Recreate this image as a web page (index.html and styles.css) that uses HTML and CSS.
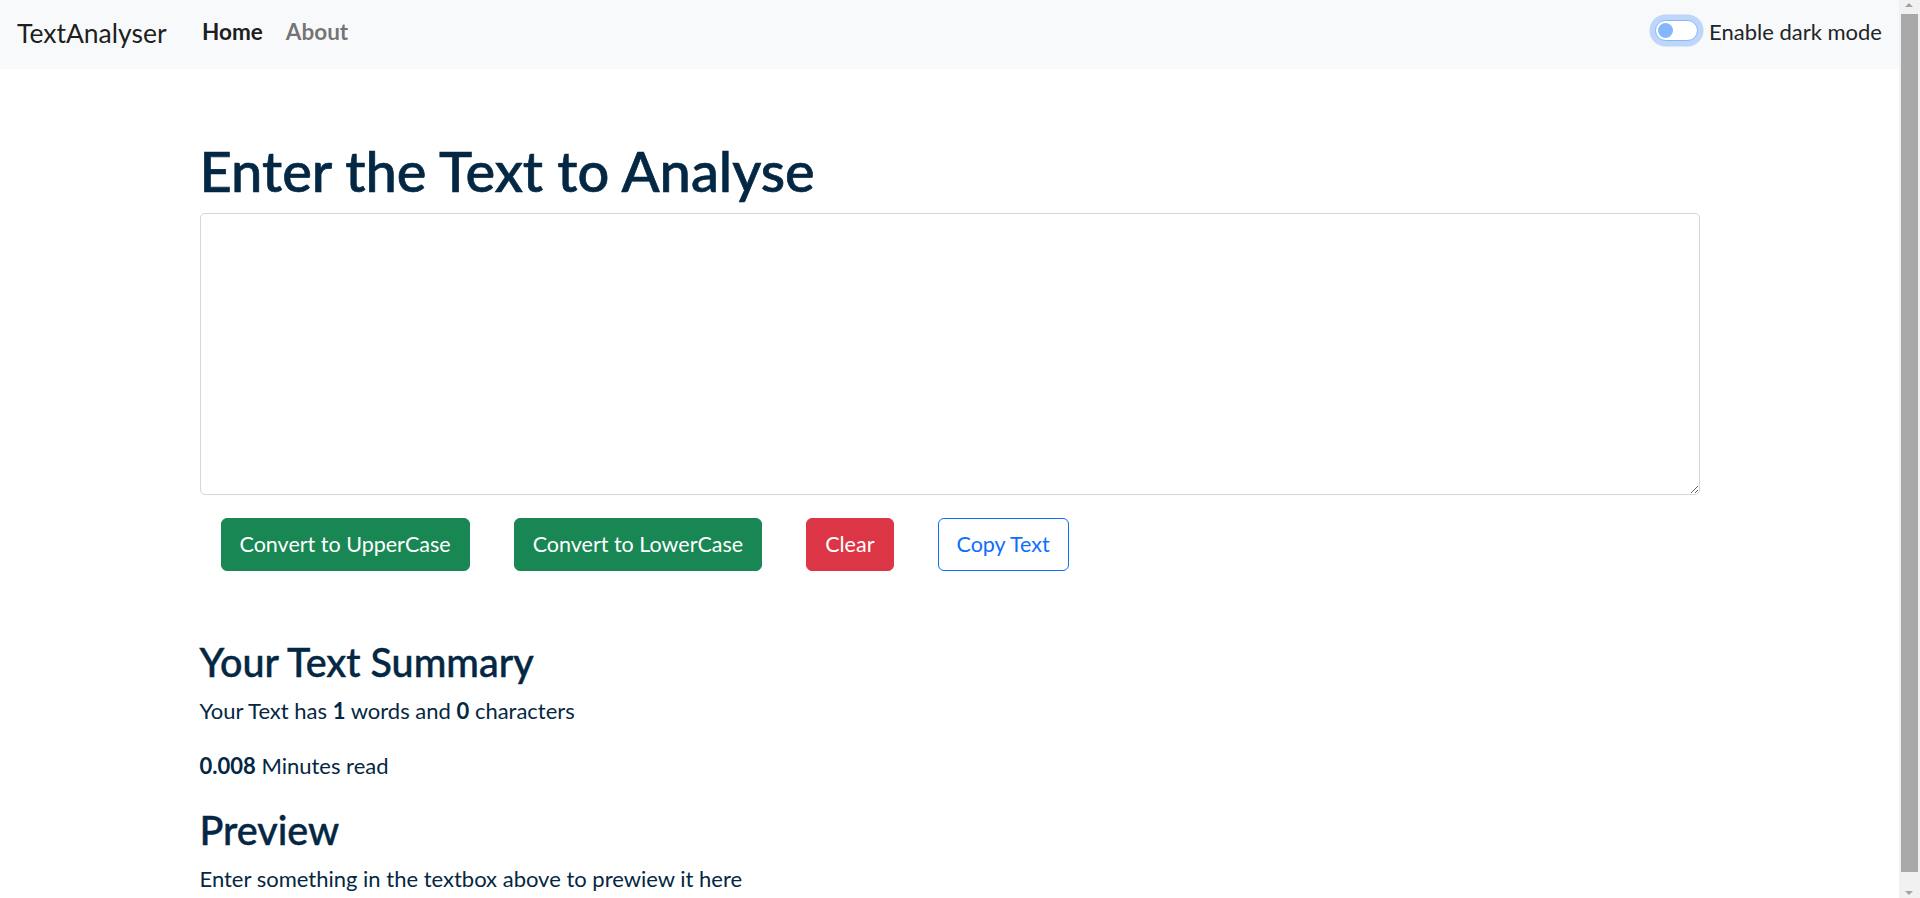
FILE: index.html
```html
<!DOCTYPE html>
<html lang="en">
<head>
<meta charset="utf-8">
<title>TextAnalyser</title>
<link rel="stylesheet" href="styles.css">
</head>
<body>
<div class="page">
  <nav class="navbar">
    <a class="brand" href="#">TextAnalyser</a>
    <ul class="nav">
      <li><a class="nav-link active" href="#">Home</a></li>
      <li><a class="nav-link" href="#">About</a></li>
    </ul>
    <div class="form-switch">
      <span class="switch"><span class="knob"></span></span>
      <label class="switch-label">Enable dark mode</label>
    </div>
  </nav>

  <main class="container">
    <h1 class="title">Enter the Text to Analyse</h1>
    <textarea class="textbox"></textarea>
    <div class="actions">
      <button class="btn btn-success">Convert to UpperCase</button>
      <button class="btn btn-success">Convert to LowerCase</button>
      <button class="btn btn-danger">Clear</button>
      <button class="btn btn-outline">Copy Text</button>
    </div>

    <section class="summary">
      <h2 class="sub">Your Text Summary</h2>
      <p class="line">Your Text has <b>1</b> words and <b>0</b> characters</p>
      <p class="line gap"><b>0.008</b> Minutes read</p>
      <h2 class="sub">Preview</h2>
      <p class="line">Enter something in the textbox above to prewiew it here</p>
    </section>
  </main>
</div>

<div class="scrollbar">
  <span class="arrow up"></span>
  <span class="thumb"></span>
  <span class="arrow down"></span>
</div>
</body>
</html>
```

FILE: styles.css
```css
html, body {
  margin: 0;
  padding: 0;
  height: 100%;
  overflow: hidden;
  background: #ffffff;
}

body {
  font-family: Lato, "Open Sans", "Liberation Sans", sans-serif;
  font-size: 22px;
  line-height: 1.5;
  color: #042743;
}

.page {
  width: 1899px;
}

/* navbar */
.navbar {
  height: 69px;
  box-sizing: border-box;
  background: #f8f9fa;
  display: flex;
  align-items: center;
  padding: 0 17px 6px 17px;
}

.brand {
  font-size: 26.5px;
  line-height: 1.5;
  color: rgba(0, 0, 0, 0.9);
  text-decoration: none;
  margin-right: 24px;
  padding-top: 4px;
}

.nav {
  list-style: none;
  margin: 0;
  padding: 0;
  display: flex;
  flex: 1;
}

.nav-link {
  display: block;
  padding: 0 11.5px;
  font-size: 22.5px;
  font-weight: 700;
  color: rgba(0, 0, 0, 0.55);
  text-decoration: none;
}

.nav-link.active {
  color: rgba(0, 0, 0, 0.9);
}

.form-switch {
  display: flex;
  align-items: center;
}

.switch {
  width: 43px;
  height: 21px;
  box-sizing: border-box;
  border: 1px solid #86b7fe;
  border-radius: 11px;
  background: #ffffff;
  box-shadow: 0 0 0 5.5px rgba(13, 110, 253, 0.25);
  display: flex;
  align-items: center;
  padding-left: 2px;
  margin-right: 11px;
  margin-bottom: 3px;
}

.knob {
  width: 15px;
  height: 15px;
  border-radius: 50%;
  background: #86b7fe;
}

.switch-label {
  font-size: 22px;
  color: #212529;
}

/* main */
.container {
  width: 1500px;
  margin: 0 auto;
}

.title {
  font-size: 56px;
  font-weight: 500;
  line-height: 1.2;
  margin: 68px 0 9px 0;
  -webkit-text-stroke: 0.7px #042743;
}

.textbox {
  display: block;
  width: 100%;
  height: 282px;
  box-sizing: border-box;
  border: 1px solid #d3d6da;
  border-radius: 5px;
  margin: 0;
  padding: 8px 16px;
  font-family: inherit;
  font-size: 22px;
  resize: vertical;
  background: #ffffff;
}

.actions {
  display: flex;
  gap: 44px;
  padding-left: 21px;
  margin-top: 23px;
}

.btn {
  height: 52.5px;
  box-sizing: border-box;
  padding: 0 18px;
  border: 1px solid transparent;
  border-radius: 6px;
  font-family: inherit;
  font-size: 21.5px;
  line-height: 33px;
  cursor: pointer;
}

.btn-success {
  background: #198754;
  border-color: #198754;
  color: #ffffff;
}

.btn-danger {
  background: #dc3545;
  border-color: #dc3545;
  color: #ffffff;
}

.btn-outline {
  background: #ffffff;
  border-color: #0d6efd;
  color: #0d6efd;
}

.summary {
  margin-top: 67px;
}

.sub {
  font-size: 39.5px;
  font-weight: 500;
  line-height: 1.2;
  margin: 0 0 9px 0;
  -webkit-text-stroke: 0.45px #042743;
}

.line {
  margin: 0;
}

.line.gap {
  margin-top: 22px;
  margin-bottom: 24px;
}

/* scrollbar drawn over the page edge */
.scrollbar {
  position: fixed;
  top: 0;
  right: 0;
  width: 21px;
  height: 898px;
  background: #f1f1f1;
}

.thumb {
  position: absolute;
  left: 2px;
  right: 2px;
  top: 14px;
  bottom: 26px;
  background: #a8a8a8;
}

.arrow {
  position: absolute;
  left: 6px;
  width: 0;
  height: 0;
  border-left: 4.5px solid transparent;
  border-right: 4.5px solid transparent;
}

.arrow.up {
  top: 3px;
  border-bottom: 4.5px solid #a3a3a3;
}

.arrow.down {
  bottom: 3px;
  border-top: 4.5px solid #a3a3a3;
}
```
